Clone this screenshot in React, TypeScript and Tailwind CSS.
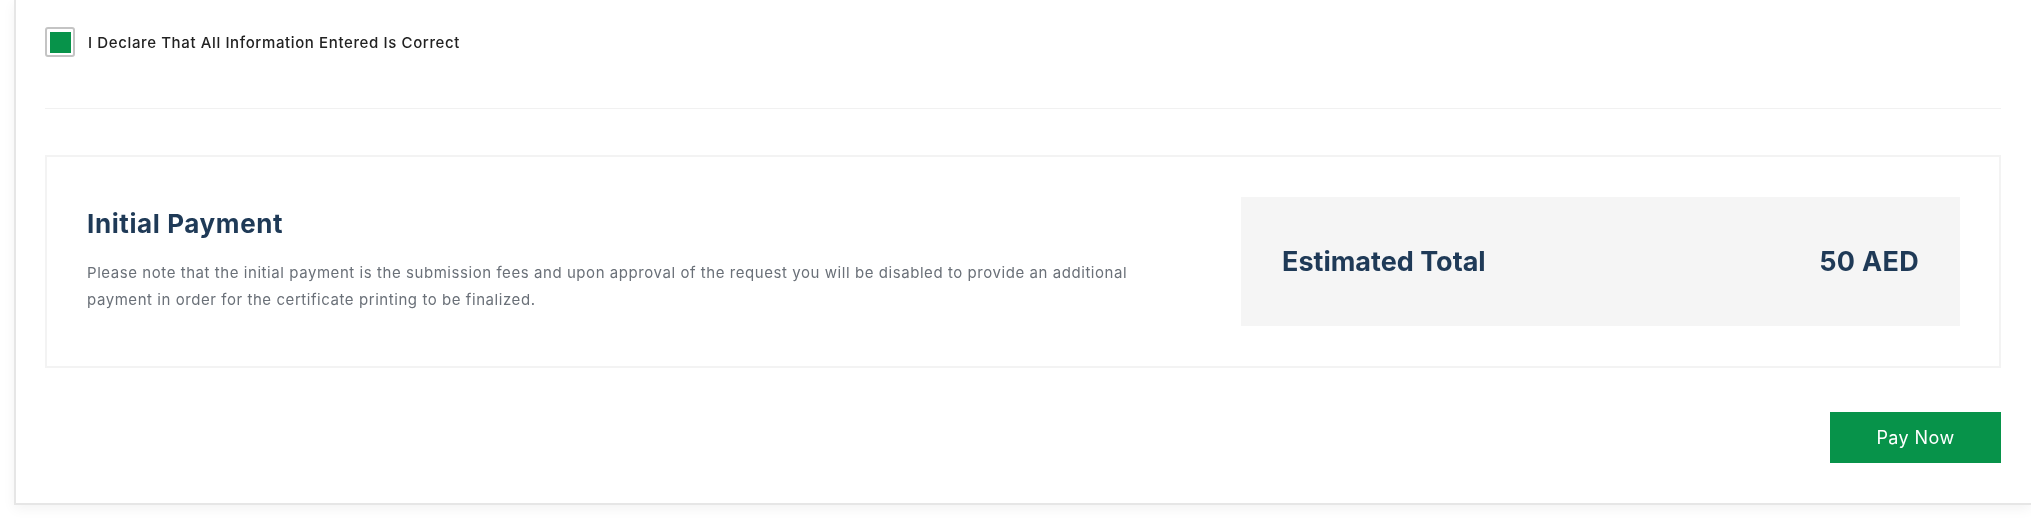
import React from "react";

export default function App() {
  return (
    <div className="w-[2031px] h-[528px] bg-white overflow-hidden font-['Inter','Liberation_Sans',sans-serif]">
      <div className="ml-[14px] h-[505px] bg-white border-l-2 border-b-2 border-[#e6e6e6] shadow-[0_4px_12px_rgba(0,0,0,0.05)] pl-[29px] pr-[30px] pt-[27px]">
        {/* declaration */}
        <div className="flex items-center h-[30px] gap-[13px]">
          <div className="w-[30px] h-[30px] rounded-[3px] border-2 border-[#c4c4c4] bg-white flex items-center justify-center">
            <div className="w-[21px] h-[21px] bg-[#07934a]" />
          </div>
          <span className="mt-[3px] text-[15px] tracking-[0.62px] font-medium text-[#222222] blur-[0.5px]">
            I Declare That All Information Entered Is Correct
          </span>
        </div>

        <div className="mt-[51px] h-px bg-[#f1f1f1]" />

        {/* payment card */}
        <div className="mt-[46px] h-[213px] border-2 border-[#f3f3f3] flex items-center justify-between pl-[40px] pr-[39px]">
          <div className="w-[1060px]">
            <h2 className="-mt-[2px] text-[26px] tracking-[0.6px] leading-[30px] font-bold text-[#1f3a57] blur-[0.5px]">Initial Payment</h2>
            <p className="mt-[20px] text-[15px] tracking-[0.56px] leading-[27px] text-[#6a7078] blur-[0.5px]">
              Please note that the initial payment is the submission fees and upon approval of the request you will be disabled to provide an additional payment in order for the certificate printing to be finalized.
            </p>
          </div>
          <div className="w-[719px] h-[129px] bg-[#f5f5f5] flex items-center justify-between px-[41px]">
            <span className="mt-[1px] text-[27px] font-bold text-[#1f3a57] blur-[0.5px]">Estimated Total</span>
            <span className="mt-[1px] text-[27px] tracking-[0.3px] font-bold text-[#1f3a57] blur-[0.5px]">50 AED</span>
          </div>
        </div>

        <div className="mt-[44px] flex justify-end">
          <button type="button" className="w-[171px] h-[51px] bg-[#07934a] text-white text-[18px] tracking-[0.4px]">
            <span className="blur-[0.5px] inline-block">Pay Now</span>
          </button>
        </div>
      </div>
    </div>
  );
}
